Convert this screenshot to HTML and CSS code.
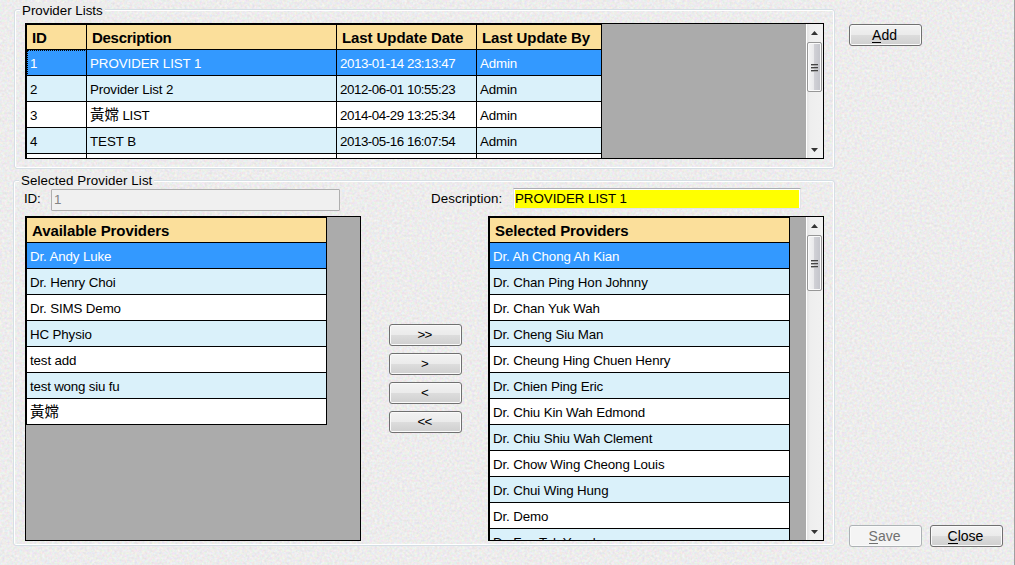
FILE: index.html
```html
<!DOCTYPE html>
<html lang="en">
<head>
<meta charset="utf-8">
<title>Provider Lists</title>
<link rel="stylesheet" href="styles.css">
</head>
<body>
<svg class="texture" width="1015" height="565" aria-hidden="true">
  <filter id="paper" x="0" y="0" width="100%" height="100%" color-interpolation-filters="sRGB">
    <feTurbulence type="fractalNoise" baseFrequency="0.4" numOctaves="2" seed="4"/>
    <feColorMatrix values="0.15 0 0 0 0.853  0 0.15 0 0 0.85  0 0 0.15 0 0.851  0 0 0 0 1"/>
  </filter>
  <rect width="1015" height="565" filter="url(#paper)"/>
</svg>
<div class="window">
  <main class="main">
    <section class="group lists">
      <h2 class="legend">Provider Lists</h2>
      <div class="grid grid-lists">
        <div class="rows cols-4">
          <div class="head"><b>ID</b><b class="narrow">Description</b><b>Last Update Date</b><b>Last Update By</b></div>
          <div class="row selected"><span class="focus">1</span><span class="caps">PROVIDER LIST 1</span><span class="date">2013-01-14 23:13:47</span><span>Admin</span></div>
          <div class="row"><span>2</span><span>Provider List 2</span><span class="date">2012-06-01 10:55:23</span><span>Admin</span></div>
          <div class="row"><span>3</span><span class="mixed"><em>黃嫦</em> LIST</span><span class="date">2014-04-29 13:25:34</span><span>Admin</span></div>
          <div class="row"><span>4</span><span class="caps">TEST B</span><span class="date">2013-05-16 16:07:54</span><span>Admin</span></div>
          <div class="row"><span></span><span></span><span></span><span></span></div>
        </div>
        <div class="scroll">
          <svg class="arrow" width="7" height="4"><path d="M3.5 0L7 4H0z"/></svg>
          <div class="thumb"><i></i><i></i><i></i></div>
          <svg class="arrow down" width="7" height="4"><path d="M0 0h7L3.5 4z"/></svg>
        </div>
      </div>
    </section>
    <section class="group detail">
      <h2 class="legend">Selected Provider List</h2>
      <div class="fields">
        <label class="id-label">ID:</label><div class="input-id">1</div>
        <label class="desc-label">Description:</label><div class="input-desc"><span>PROVIDER LIST 1</span></div>
      </div>
      <div class="transfer">
        <div class="grid">
          <div class="rows">
            <div class="head"><b>Available Providers</b></div>
            <div class="row selected"><span>Dr. Andy Luke</span></div>
            <div class="row"><span>Dr. Henry Choi</span></div>
            <div class="row"><span>Dr. SIMS Demo</span></div>
            <div class="row"><span>HC Physio</span></div>
            <div class="row"><span>test add</span></div>
            <div class="row"><span class="tight">test wong siu fu</span></div>
            <div class="row"><span><em>黃嫦</em></span></div>
          </div>
        </div>
        <div class="movers">
          <button class="btn">&gt;&gt;</button>
          <button class="btn">&gt;</button>
          <button class="btn">&lt;</button>
          <button class="btn">&lt;&lt;</button>
        </div>
        <div class="grid">
          <div class="rows">
            <div class="head"><b>Selected Providers</b></div>
            <div class="row selected"><span>Dr. Ah Chong Ah Kian</span></div>
            <div class="row"><span>Dr. Chan Ping Hon Johnny</span></div>
            <div class="row"><span>Dr. Chan Yuk Wah</span></div>
            <div class="row"><span>Dr. Cheng Siu Man</span></div>
            <div class="row"><span>Dr. Cheung Hing Chuen Henry</span></div>
            <div class="row"><span>Dr. Chien Ping Eric</span></div>
            <div class="row"><span>Dr. Chiu Kin Wah Edmond</span></div>
            <div class="row"><span>Dr. Chiu Shiu Wah Clement</span></div>
            <div class="row"><span>Dr. Chow Wing Cheong Louis</span></div>
            <div class="row"><span>Dr. Chui Wing Hung</span></div>
            <div class="row"><span>Dr. Demo</span></div>
            <div class="row"><span>Dr. Fan Tak Yuenkau</span></div>
          </div>
          <div class="scroll">
            <svg class="arrow" width="7" height="4"><path d="M3.5 0L7 4H0z"/></svg>
            <div class="thumb tall"><i></i><i></i><i></i></div>
            <svg class="arrow down" width="7" height="4"><path d="M0 0h7L3.5 4z"/></svg>
          </div>
        </div>
      </div>
    </section>
  </main>
  <aside class="side">
    <button class="btn"><u>A</u>dd</button>
    <div class="footer">
      <button class="btn disabled" disabled><u>S</u>ave</button>
      <button class="btn"><u>C</u>lose</button>
    </div>
  </aside>
</div>
</body>
</html>
```

FILE: styles.css
```css
* { box-sizing: border-box; }
body {
  margin: 0;
  background: #ebebeb;
  color: #000;
  font: 13.33px/16px "Liberation Sans", "Noto Sans CJK TC", sans-serif;
}
.texture { position: absolute; top: 0; left: 0; z-index: -1; }
.window {
  display: flex;
  width: 1015px;
  height: 565px;
  overflow: hidden;
  border-right: 1px solid #a0a0a0;
}
.main { width: 835px; padding: 9px 0 0 13px; flex: none; }

.group {
  border: 1px solid #d5dfe5;
  border-radius: 3px;
  box-shadow: inset 0 0 0 1px #fff;
  display: flex;
  flex-direction: column;
}
.lists { height: 160px; margin-left: 1px; padding-left: 10px; width: 821px; }
.detail { height: 366px; margin-top: 11px; padding-left: 11px; width: 822px; }
.legend {
  margin: -7px 0 4px -5px;
  padding: 0 2px;
  height: 16px;
  font-size: 13.33px;
  font-weight: normal;
  background: #ececec;
  align-self: flex-start;
}
.detail .legend { margin: -8px 0 -1px -6px; letter-spacing: 0.08px; }

.grid {
  display: flex;
  justify-content: space-between;
  align-items: flex-start;
  width: 336px;
  height: 325px;
  flex: none;
  overflow: hidden;
  background: #ababab;
  border: 1px solid #000;
}
.grid-lists { width: 799px; height: 136px; }
.rows { border: solid #000; border-width: 1px 0 0 1px; }
.head, .row { display: grid; grid-template-columns: 300px; }
.cols-4 > * { grid-template-columns: 60px 250px 140px 125px; }
.head b, .row span {
  border: solid #000;
  border-width: 0 1px 1px 0;
  white-space: pre;
}
.head b {
  height: 25px;
  padding: 0 0 0 5px;
  line-height: 25px;
  font-size: 15px;
  letter-spacing: -0.08px;
  background: #fbdf9b;
}
.head .narrow { letter-spacing: -0.28px; }
.row span {
  height: 26px;
  padding-left: 3px;
  line-height: 27px;
  letter-spacing: -0.13px;
  background: #fff;
}
.row em { font: 14.5px/20px "Noto Sans CJK TC", sans-serif; letter-spacing: 0; }
.row .date { letter-spacing: -0.45px; }
.row .mixed { letter-spacing: -0.3px; }
.row .caps { letter-spacing: -0.06px; }
.row .tight { letter-spacing: -0.2px; }
.row:nth-child(odd) span { background: #daf1fa; }
.row.selected span { background: #3399ff; color: #fff; }
.row .focus { outline: 1px dotted #000; outline-offset: -1px; }

.scroll {
  display: flex;
  flex-direction: column;
  align-items: center;
  align-self: stretch;
  width: 17px;
  padding: 7px 0 6px;
  background: linear-gradient(90deg, #fff 0 1px, #e3e3e3 1px, #eee 4px, #f1f1f1);
}
.arrow { display: block; fill: #333; }
.arrow.down { margin-top: auto; }
.thumb {
  display: flex;
  flex-direction: column;
  align-items: center;
  justify-content: center;
  gap: 2px;
  width: 15px;
  height: 50px;
  margin-top: 7px;
  border: 1px solid #979797;
  border-radius: 2px;
  box-shadow: inset 0 0 0 1px #fafafa;
  background: linear-gradient(90deg, #f5f5f5, #e9e9eb 45%, #d0d0d5 50%, #c2c3ca);
}
.thumb.tall { height: 56px; }
.thumb i { width: 7px; height: 1px; background: #444; box-shadow: 0 1px #aaa; }

.fields { display: flex; height: 28px; }
.id-label { width: 27px; padding-top: 3px; margin-left: -1px; letter-spacing: -0.2px; }
.input-id {
  width: 289px;
  height: 22px;
  margin-top: 1px;
  padding: 1px 2px;
  border: 1px solid #afafaf;
  border-radius: 1px;
  background: #f0f0f0;
  color: #838383;
  line-height: 18px;
}
.desc-label { width: 82px; margin-left: 91px; padding-top: 3px; letter-spacing: 0.08px; }
.input-desc {
  width: 288px;
  height: 21px;
  padding: 1px 1px 0;
  border: 1px solid #e2e3ea;
  border-top-color: #abadb3;
  background: #fff;
}
.input-desc span { display: block; height: 18px; line-height: 17px; letter-spacing: -0.03px; background: #ff0; }
.transfer { display: flex; }
.movers { width: 127px; padding: 108px 0 0 28px; display: flex; flex-direction: column; gap: 7px; }

.btn {
  width: 73px;
  height: 22px;
  padding: 0;
  border: 1px solid #707070;
  border-radius: 3px;
  box-shadow: inset 0 0 0 1px #fafafa;
  background: linear-gradient(#f2f2f2, #ebebeb 48%, #dddddd 50%, #cfcfcf);
  color: #000;
  font: 13.33px/20px "Liberation Sans", sans-serif;
}
.movers .btn { padding-right: 2px; letter-spacing: -0.8px; }
.btn u { text-decoration: none; border-bottom: 1px solid currentColor; display: inline-block; line-height: 14px; }
.side .btn { padding-right: 2px; font-size: 14px; }
.side .btn.disabled { border-color: #adb2b5; background: #f4f4f4; color: #707070; }
.side { flex: 1; display: flex; flex-direction: column; justify-content: space-between; padding: 24px 11px 18px 14px; }
.footer { display: flex; gap: 8px; }
```
